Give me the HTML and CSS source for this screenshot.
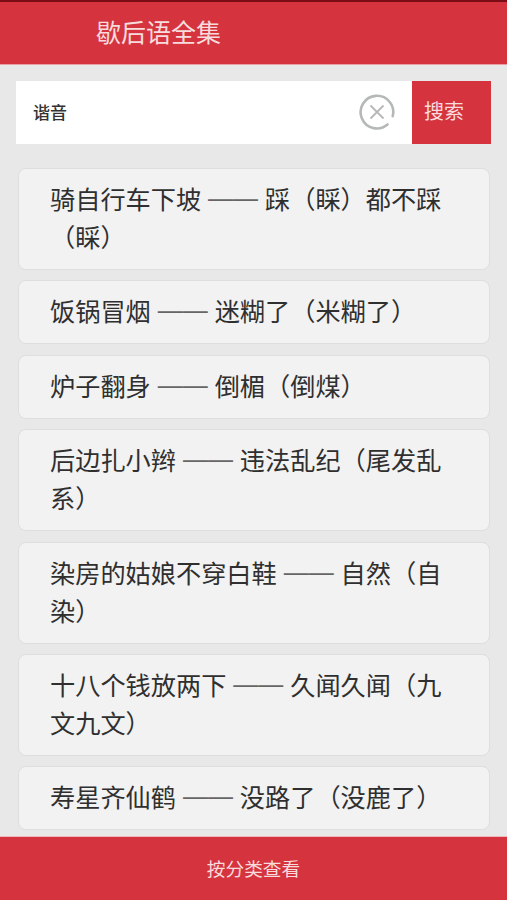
FILE: index.html
```html
<!DOCTYPE html>
<html lang="zh-CN">
<head>
<meta charset="utf-8">
<title>歇后语全集</title>
<link rel="stylesheet" href="styles.css">
</head>
<body>
<div class="app">
  <header class="topbar"><h1 class="title">歇后语全集</h1></header>
  <main class="content">
    <form class="search">
      <div class="field">
        <span class="query">谐音</span>
        <svg class="clear" width="36" height="36" viewBox="0 0 36 36" fill="none" stroke="#b4b9b7" aria-hidden="true">
          <path d="M28.5 30.5A16.3 16.3 0 1 1 33.7 22.2" stroke-width="2.6" stroke-linecap="round"/>
          <path d="M11.5 11.5L24.5 24.5M24.5 11.5L11.5 24.5" stroke-width="1.8"/>
        </svg>
      </div>
      <button class="search-btn" type="button">搜索</button>
    </form>
    <ul class="list">
      <li class="card">骑自行车下坡<span class="dash"> —— </span>踩（睬）都不踩（睬）</li>
      <li class="card">饭锅冒烟<span class="dash"> —— </span>迷糊了（米糊了）</li>
      <li class="card">炉子翻身<span class="dash"> —— </span>倒楣（倒煤）</li>
      <li class="card">后边扎小辫<span class="dash"> —— </span>违法乱纪（尾发乱系）</li>
      <li class="card">染房的姑娘不穿白鞋<span class="dash"> —— </span>自然（自染）</li>
      <li class="card">十八个钱放两下<span class="dash"> —— </span>久闻久闻（九文九文）</li>
      <li class="card">寿星齐仙鹤<span class="dash"> —— </span>没路了（没鹿了）</li>
    </ul>
  </main>
  <footer class="bottombar">按分类查看</footer>
</div>
</body>
</html>
```
FILE: styles.css
```css
* { box-sizing: border-box; }
html, body { margin: 0; padding: 0; height: 100%; }
body {
  background: #e8e8e8;
  font-family: "Noto Sans CJK SC", "Noto Sans", sans-serif;
  overflow: hidden;
}
.app { display: flex; flex-direction: column; height: 900px; }
.topbar {
  flex: none;
  height: 65px;
  background: #d5343f;
  border-top: 2px solid #7a0c14;
  border-bottom: 1px solid #e8a0a4;
  display: flex;
  align-items: center;
  padding: 0 0 3px 96px;
}
.title { margin: 0; font-size: 25px; font-weight: 400; line-height: 1; color: #f8dcdd; }
.content { flex: 1; min-height: 0; overflow: hidden; padding: 16px 16px 0; }
.search { display: flex; height: 63px; width: 475px; }
.field {
  flex: 1;
  background: #fff;
  display: flex;
  align-items: center;
  justify-content: space-between;
  padding: 0 17px 0 17px;
}
.query { font-size: 17px; font-weight: 500; color: #333; margin-bottom: 2px; }
.clear { display: block; margin-bottom: 2px; }
.search-btn {
  flex: none;
  width: 79px;
  border: 0;
  padding: 0 0 4px 12px;
  text-align: left;
  background: #d5343f;
  color: #f8dcdd;
  font: inherit;
  font-size: 20px;
}
.list {
  list-style: none;
  margin: 24px 1px 0 2px;
  padding: 0;
  display: flex;
  flex-direction: column;
  gap: 10.4px;
}
.card {
  background: #f2f2f2;
  border: 1px solid #dedede;
  border-radius: 8px;
  padding: 10px 31px 14px 31px;
  font-size: 25.2px;
  line-height: 38px;
  color: #2f2f2f;
}
.dash {
  font-family: "Liberation Sans", sans-serif;
  font-size: 25px;
  line-height: 1;
  vertical-align: 2px;
  color: #666;
}
.bottombar {
  flex: none;
  height: 64px;
  background: #d5343f;
  border-top: 1px solid #f0b8ba;
  color: #f8dcdd;
  font-size: 18.7px;
  padding-bottom: 2px;
  display: flex;
  align-items: center;
  justify-content: center;
}
```
